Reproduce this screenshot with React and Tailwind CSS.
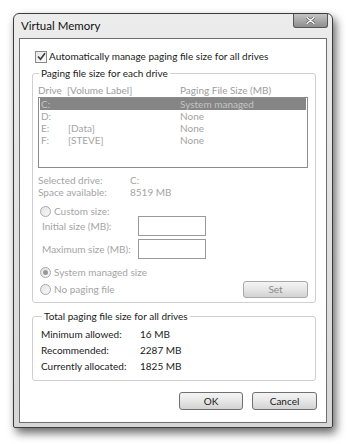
import React from 'react';

const font = { fontFamily: 'Lato, "Noto Sans", sans-serif' };

function Radio({ checked }) {
  return (
    <span className="relative inline-flex w-[11px] h-[11px] rounded-full border border-[#a8a8a8] bg-gradient-to-br from-[#e4e4e4] to-[#f8f8f8] items-center justify-center">
      {checked && <span className="w-[5px] h-[5px] rounded-full bg-[#9a9a9a]" />}
    </span>
  );
}

function Input() {
  return <div className="w-[68px] h-[20px] border border-[#9a9a9a] bg-white" />;
}

function Button({ children, disabled, className = '' }) {
  return (
    <div
      className={`flex items-center justify-center rounded-[3px] border border-[#707070] bg-gradient-to-b from-[#f4f4f4] via-[#e6e6e6] to-[#d2d2d2] ${disabled ? 'text-[#8a8a8a] border-[#a8a8a8]' : 'text-[#1a1a1a]'} ${className}`}
    >
      {children}
    </div>
  );
}

const drives = [
  { d: 'C:', label: '', size: 'System managed', sel: true },
  { d: 'D:', label: '', size: 'None' },
  { d: 'E:', label: '[Data]', size: 'None' },
  { d: 'F:', label: '[STEVE]', size: 'None' },
];

export default function App() {
  return (
    <div className="w-[350px] h-[444px] bg-white overflow-hidden text-[10px] text-[#1a1a1a]" style={font}>
      <div className="ml-[13px] mt-[13px] w-[320px] h-[415px] flex flex-col rounded-t-[6px] rounded-b-[2px] border border-[#3c3c3c] bg-gradient-to-b from-[#ececec] to-[#d6d6d6] shadow-[3px_5px_10px_rgba(0,0,0,0.6)]">
        {/* title bar */}
        <div className="h-[24px] flex items-start justify-between shrink-0">
          <span className="pl-[7px] pt-[5px] text-[11.5px] leading-[14px] text-[#111]">Virtual Memory</span>
          <div className="mr-[4px] w-[35px] h-[14px] rounded-b-[3px] border border-t-0 border-[#555] bg-gradient-to-b from-[#c4c4c4] to-[#8e8e8e] flex items-center justify-center">
            <svg width="9" height="7" viewBox="0 0 9 7">
              <path d="M1 0.5 L8 6.5 M8 0.5 L1 6.5" stroke="#555" strokeWidth="2.6" strokeLinecap="round" />
              <path d="M1 0.5 L8 6.5 M8 0.5 L1 6.5" stroke="#fff" strokeWidth="1.4" strokeLinecap="round" />
            </svg>
          </div>
        </div>
        {/* client */}
        <div className="mx-[5px] mb-[4px] flex-1 border border-[#6e6e6e] bg-white flex flex-col">
          <div className="mt-[11px] ml-[15px] flex items-center h-[13px] gap-[2px]">
            <span className="w-[12px] h-[12px] border border-[#8a8a8a] bg-gradient-to-br from-[#e8e8e8] to-[#fafafa] flex items-center justify-center">
              <svg width="9" height="9" viewBox="0 0 9 9">
                <path d="M1 4.5 L3.5 7.2 L8 1.2" stroke="#3a3a3a" strokeWidth="1.6" fill="none" />
              </svg>
            </span>
            <span className="leading-[13px]">Automatically manage paging file size for all drives</span>
          </div>

          <fieldset className="mt-[3px] ml-[12px] mr-[10px] border border-[#d0d0d0] rounded-[3px] pl-[5px] pr-[7px] pb-[4px]">
            <legend className="ml-[1px] px-[2px] leading-[14px]">Paging file size for each drive</legend>
            <div className="mt-[3px] h-[14px] flex leading-[14px] text-[#9c9c9c]">
              <span className="w-[142px]">Drive&nbsp;&nbsp;[Volume Label]</span>
              <span>Paging File Size (MB)</span>
            </div>
            <div className="h-[71px] border border-[#8c8c8c] text-[#a4a4a4] pl-[1px] pr-[1px]">
              {drives.map((r) => (
                <div
                  key={r.d}
                  className={`flex h-[12px] leading-[12px] ${r.sel ? 'bg-[#858585] text-[#c4c4c4]' : ''}`}
                >
                  <span className="w-[28px] pl-[1px]">{r.d}</span>
                  <span className="w-[112px]">{r.label}</span>
                  <span>{r.size}</span>
                </div>
              ))}
            </div>
            <div className="mt-[6px] text-[#a4a4a4] leading-[12px]">
              <div className="flex">
                <span className="w-[92px]">Selected drive:</span>
                <span>C:</span>
              </div>
              <div className="flex">
                <span className="w-[92px]">Space available:</span>
                <span>8519 MB</span>
              </div>
            </div>
            <div className="mt-[8px] ml-[2px] flex items-center gap-[3px] h-[10px] text-[#a4a4a4]">
              <Radio />
              <span>Custom size:</span>
            </div>
            <div className="flex items-center h-[20px] text-[#a4a4a4]">
              <span className="ml-[4px] w-[96px]">Initial size (MB):</span>
              <Input />
            </div>
            <div className="mt-[3px] flex items-center h-[20px] text-[#a4a4a4]">
              <span className="ml-[4px] w-[96px]">Maximum size (MB):</span>
              <Input />
            </div>
            <div className="mt-[7px] ml-[2px] flex items-center gap-[3px] h-[12px] text-[#a4a4a4]">
              <Radio checked />
              <span>System managed size</span>
            </div>
            <div className="mt-[3px] flex items-center justify-between h-[17px] text-[#a4a4a4]">
              <div className="ml-[2px] flex items-center gap-[3px]">
                <Radio />
                <span>No paging file</span>
              </div>
              <Button disabled className="w-[65px] h-[17px]">Set</Button>
            </div>
          </fieldset>

          <fieldset className="mt-[6px] ml-[12px] mr-[10px] border border-[#d0d0d0] rounded-[3px] pl-[8px] pb-[6px]">
            <legend className="ml-[1px] px-[2px] leading-[14px]">Total paging file size for all drives</legend>
            <div className="pt-[3px] leading-[16px]">
              <div className="flex"><span className="w-[99px]">Minimum allowed:</span><span>16 MB</span></div>
              <div className="flex"><span className="w-[99px]">Recommended:</span><span>2287 MB</span></div>
              <div className="flex"><span className="w-[99px]">Currently allocated:</span><span>1825 MB</span></div>
            </div>
          </fieldset>

          <div className="mt-[11px] mr-[9px] flex justify-end gap-[9px]">
            <Button className="w-[64px] h-[18px]">OK</Button>
            <Button className="w-[65px] h-[18px]">Cancel</Button>
          </div>
        </div>
      </div>
    </div>
  );
}
